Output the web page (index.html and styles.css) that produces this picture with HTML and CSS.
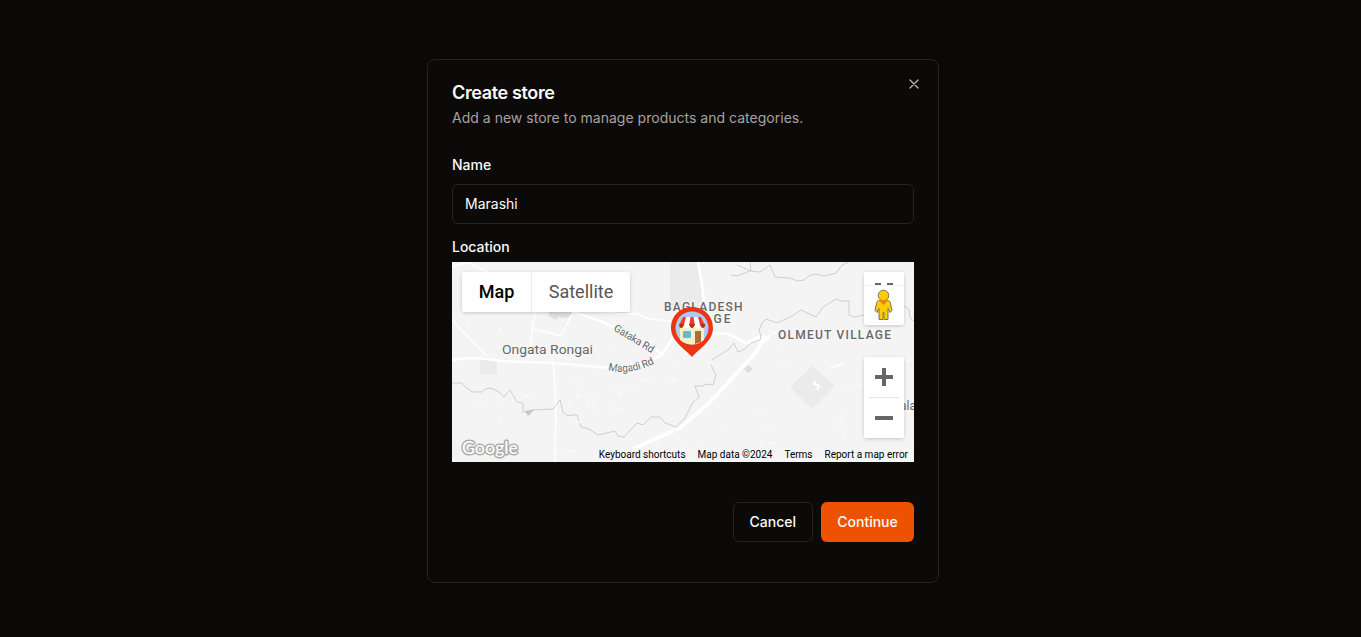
FILE: index.html
```html
<!DOCTYPE html>
<html lang="en">
<head>
<meta charset="utf-8">
<title>Create store</title>
<link rel="stylesheet" href="styles.css">
</head>
<body>
<main class="dialog">
  <button class="close" aria-label="Close"><svg width="16" height="16" viewBox="0 0 24 24" fill="none" stroke="currentColor" stroke-width="2" stroke-linecap="round"><path d="M18 6 6 18M6 6l12 12"/></svg></button>
  <h1 class="title">Create store</h1>
  <p class="subtitle">Add a new store to manage products and categories.</p>
  <label class="label" for="name">Name</label>
  <input class="input" id="name" value="Marashi">
  <div class="label location">Location</div>
  <section class="map">
    <svg class="canvas" width="462" height="200" viewBox="0 0 462 200">
      <rect width="462" height="200" fill="#f4f4f4"/>
      <g fill="#ebebeb">
        <path d="M218 0h28l5 46h-33zM28 97h17v15H28zM338 125l22-21 23 20-23 23z"/>
        <path fill="#dedede" d="M97 50h25l-7 6-9-1-2 3-7-4zM292 107l4-4 5 4-5 4z"/>
        <path fill="#c6c6c6" d="m73 149 10-2-7 7z"/>
      </g>
      <g fill="none" stroke="#fff" stroke-linejoin="round" stroke-linecap="round">
        <path stroke-width="2.6" d="M0 98q20-4 48 1l54 2 46 4q26 2 45-4l17-8 13-21M122 50l26 9 34 15 28 18M246 0l4 23 3 25M262 71l15 1 17 9 14-3"/>
        <path stroke-width="3.8" d="m181 187 47-21 30-26 39-42 8-9q4-10 11-13-8-2-19 4"/>
        <path stroke-width="1.4" d="m0 58 35 36M83 50l-7 48M82 67l27 7 12-24M101 100l3 40-1 60M0 5l15-5 36 17M148 48l18 4 19 0 12 5 21 2M181 187l-30 11M153 52l-8-3M378 106l14-5"/>
      </g>
      <g fill="none" stroke="#cacaca" stroke-width=".9" stroke-linejoin="round">
        <path d="M0 121h10l3 4 8 5h9l3-3 6-1 8 4 5 5 6-7 7 12 6 1v9h8l2-2 20-1 7-9 3 12 4 4 4-1h6l4 12 8 2 9 6 17-4 3 5 6 1 13-14 3 1 3 1 8-8h9l5 6 11 4 9-9 8-16 6-5-4-11h8l2-2 8 1 3-10-5-10M260 98l17-11 5-6 4 9 7-3 6-6 9-3 1-4-2-6 3-7 4-4 11 4 15-7 9-6 15 7 7-10 5-3 8-5 6 2h7v14l5 2 10-2M279 13l6 1 13-5 10 1 10-7 5 12 15 1 7 3 7-1 5-4 7-2 8 2 12-3 6-8 7-3M285 3l14 6-1-9M452 44l5 3 1 9 4 3"/>
      </g>
      <path fill="none" stroke="#fff" d="m12 22 2 2m19-2 3-1m-21 37 2 5m29-15 2 2m-3 22 4-6m35 26 3-2M27 143l2 2m19-2 2 4m-4 14 4-3m22-24 7 1m49-8 3 3m-7 5 6-2m-8 27h8m6-28 5-1m-26 58h6m21-48v8m15-5v4m5-24h5m11 1h3m-15 7 4 2m-5 13h4m23-29 5-1m-80 22 1 5m16-5 4 3m51 23 5-3m10 18 4 3m21-3 3 2m-14-25 3-2m26 20-3 4m29-16 3 3m27-10 3 3m-87-40 5-2m-84-8 4-3m-22 13h4m-9-33 4-2m40 0 2 3m18 24 5-2m35-6 4-4m85 84-2 7m10-9h5m-17-32 3 4m6 12 3 1m28 34-6 8m1-11 7 2m-7 4 6 3m46-81 5-2m7 1 5-2m6 5 6-4M315 75l12-7m-10 1 10 2m-2 15 3 3m52 76 5-4m7 8 2 6m60-28 4 3m-3-52 3 1m-43 43 3-3m-31 15 3 2m-60-54 4 2m59 49-4 3m57 39 7-8"/>
      <path fill="none" stroke="#fff" stroke-width="2" d="m361 121 6 3-2 4m-4-7 3-1"/>
      <g class="map-text" fill="#686868">
        <text x="50" y="91.5" font-size="13.6" textLength="91" lengthAdjust="spacingAndGlyphs">Ongata Rongai</text>
        <text x="212" y="49" font-size="12" font-weight="500" textLength="78.5">BAGLADESH</text>
        <text y="61" font-size="12" font-weight="500"><tspan x="225" textLength="34">VILLA</tspan><tspan x="261.5" textLength="17">GE</tspan></text>
        <text x="326" y="77" font-size="12" font-weight="500" textLength="113">OLMEUT VILLAGE</text>
        <text x="448" y="148" font-size="12">ala</text>
        <text font-size="10.5" textLength="45" transform="translate(161 68) rotate(31)">Gataka Rd</text>
        <path id="magadi" fill="none" d="M156 108q22 6 50-8"/>
        <text font-size="10.5"><textPath href="#magadi" textLength="48">Magadi Rd</textPath></text>
      </g>
      <text class="google" x="10" y="192" textLength="56" lengthAdjust="spacingAndGlyphs">Google</text>
      <g>
        <path fill="#ec3515" d="M240 45c-12 0-21 9-21 21 0 13 13 20 21 29 8-9 21-16 21-29 0-12-9-21-21-21z"/>
        <circle cx="240" cy="66" r="16.5" fill="#aecbf5"/>
        <path fill="#f3f0c6" d="M228 62h24v16q-12 9-24 0z"/>
        <path fill="#fff" d="M231 55h18l4 8q-1 4-4 2-3 3-6 0-3 3-6 0-3 3-6 0-3 2-4-2z"/>
        <path fill="#ef3c25" d="M231 55h3l-2 8h-5zm7.500 0h3l1.300 8h-5.600zM246 55h3l4 8h-5z"/>
        <path fill="#bb2c18" d="M227 62h5.200q-1 4-3 4t-2.200-4zm10 0h6q-1 4-3 4t-3-4zm11 0h5.200q-.2 4-2.200 4t-3-4z"/>
        <rect x="231" y="69" width="8" height="7" rx="1" fill="#65b9d4"/>
        <path fill="#ad6d3b" d="M243 69h6v11l-6 2z"/>
      </g>
    </svg>
    <div class="map-type"><button class="type active">Map</button><button class="type">Satellite</button></div>
    <div class="pegman"><svg width="40" height="53" viewBox="0 0 40 53">
      <path fill="#666" d="M11 11h6v2h-6zM23 11h6v2h-6z"/><path stroke="#f3f3f3" d="M0 13.5h40"/>
      <path fill="#fbcb05" stroke="#7e7548" d="M14.500 28.500h10q2 1 2 3l1.500 7-2 2-2-4v11h-4v-7h-1v7h-4v-11l-2 4-2-2 1.500-7q0-2 2-3z"/>
      <circle cx="19.5" cy="23.5" r="5.3" fill="#fbcb05" stroke="#7e7548"/><path fill="#e88013" d="M15 28h9l-4.500 5z"/>
    </svg></div>
    <div class="zoom"><button class="zoom-btn" aria-label="Zoom in"><svg width="18" height="18"><path fill="#666" d="M7 0h4v7h7v4h-7v7H7v-7H0V7h7z"/></svg></button><button class="zoom-btn out" aria-label="Zoom out"><svg width="18" height="4"><path fill="#666" d="M0 0h18v4H0z"/></svg></button></div>
    <footer class="credits"><span>Keyboard shortcuts</span><span>Map data ©2024</span><span>Terms</span><span>Report a map error</span></footer>
  </section>
  <div class="actions"><button class="button">Cancel</button><button class="button primary">Continue</button></div>
</main>
</body>
</html>
```
FILE: styles.css
```css
* { box-sizing: border-box; }
body { margin: 0; height: 637px; background: #0a0908; color: #fafaf9; font-family: Inter, sans-serif; font-size: 14px; overflow: hidden; padding: 59px 0 0 427px; }
button { font: inherit; color: inherit; border: 0; background: none; padding: 0; }
svg { display: block; }
.dialog { position: relative; width: 512px; height: 524px; padding: 24px; border: 1px solid #262423; border-radius: 8px; background: #0b0a08; display: flex; flex-direction: column; }
.close { position: absolute; right: 16px; top: 16px; color: #b5b2b0; }
.title { margin: 0; font-size: 18px; line-height: 18px; font-weight: 600; letter-spacing: -.36px; }
.subtitle { margin: 6px 0 0; line-height: 20px; letter-spacing: .015px; color: #a8a29e; }
.label { font-weight: 500; line-height: 14px; margin-top: 30px; }
.input { margin-top: 12px; height: 40px; border: 1px solid #262423; border-radius: 6px; background: #0b0a08; color: inherit; font: inherit; padding: 7px 12px 9px; outline: 0; }
.location { margin-top: 16px; }
.map { position: relative; margin-top: 8px; height: 200px; flex: none; overflow: hidden; font-family: Roboto, sans-serif; }
.map-text text { font-family: Roboto, sans-serif; paint-order: stroke; stroke: #f7f7f7; stroke-width: 2px; }
.google { font: 500 18px Lato, sans-serif; fill: #fff; stroke: #adadad; stroke-width: 3px; stroke-linejoin: round; paint-order: stroke; }
.map-type { position: absolute; left: 10px; top: 10px; display: flex; height: 40px; background: #fff; border-radius: 2px; box-shadow: 0 1px 4px -1px rgba(0,0,0,.3); font-size: 18px; color: #565656; }
.type { width: 98px; padding-bottom: 2px; }
.type.active { width: 70px; color: #000; font-weight: 500; border-right: 1px solid #ececec; }
.pegman, .zoom { position: absolute; right: 10px; width: 40px; background: #fff; border-radius: 2px; box-shadow: 0 1px 4px -1px rgba(0,0,0,.3); }
.pegman { top: 10px; height: 53px; }
.zoom { top: 95px; height: 81px; display: flex; flex-direction: column; align-items: center; }
.zoom-btn { width: 30px; height: 40px; display: grid; place-items: center; }
.out { height: 41px; border-top: 1px solid #e6e6e6; }
.credits { position: absolute; right: 0; bottom: 0; height: 14px; display: flex; gap: 12px; padding: 0 6px; font-size: 10px; line-height: 14px; color: #000; background: rgba(245,245,245,.7); }
.actions { display: flex; justify-content: flex-end; gap: 8px; margin-top: 40px; }
.button { height: 40px; padding: 0 16px 2px; border: 1px solid #262423; border-radius: 6px; font-weight: 500; }
.primary { width: 93px; background: #ee5200; border: 0; }
```
